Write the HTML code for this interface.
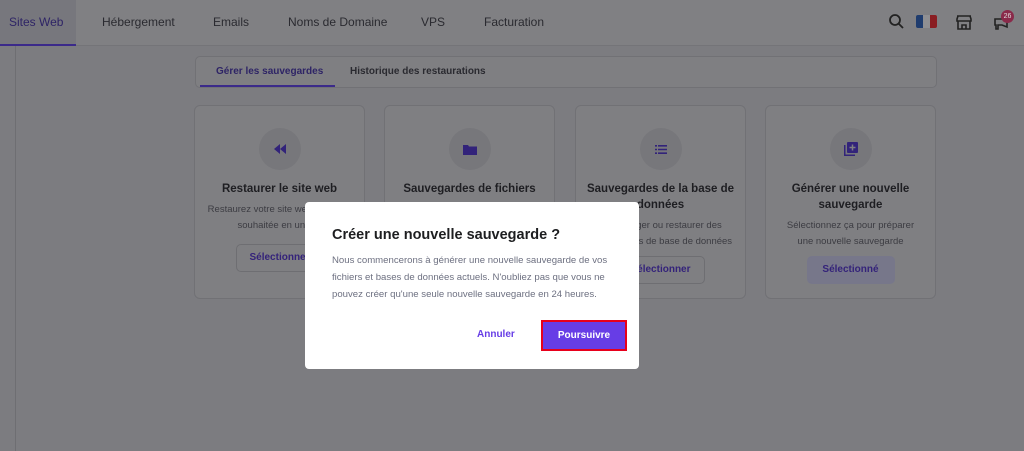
<!DOCTYPE html>
<html><head><meta charset="utf-8"><style>
*{box-sizing:border-box;margin:0;padding:0}
body{width:1024px;height:451px;overflow:hidden;background:#7c7c80;font-family:"Liberation Sans",sans-serif;position:relative}
.hdr{position:absolute;left:0;top:0;width:1024px;height:46px;background:#808083;border-bottom:1px solid #747478}
.nav{position:absolute;top:15px;font-size:12px;color:#2a2a30}
.side{position:absolute;left:15px;top:46px;width:1px;height:405px;background:#6e6e72}
.tabs{position:absolute;left:195px;top:56px;width:742px;height:32px;border:1px solid #717175;border-radius:5px;background:#7f7f82}
.card{position:absolute;top:105px;width:171px;height:194px;border:1px solid #717175;border-radius:6px;background:#7f7f82;text-align:center}
.circ{width:42px;height:42px;border-radius:50%;background:#77777b;margin:22px auto 0;display:flex;align-items:center;justify-content:center}
.ct{font-size:11.5px;font-weight:bold;color:#1e1e22;margin-top:11px;line-height:16px}
.cd{font-size:9.5px;color:#3c3c42;margin-top:5px;line-height:16px}
.btn{margin:10px auto 0;width:88px;height:28px;border:1px solid #6e6e72;border-radius:5px;font-size:10px;font-weight:bold;color:#34237a;line-height:26px}
.modal{position:absolute;left:305px;top:202px;width:334px;height:167px;background:#fff;border-radius:4px}
</style></head><body>
<div class="hdr">
<div style="position:absolute;left:0;top:0;width:76px;height:46px;background:#77777d;border-bottom:2px solid #3b2a8a"></div>
<div class="nav" style="left:9px;color:#2e2466">Sites Web</div>
<div class="nav" style="left:102px">Hébergement</div>
<div class="nav" style="left:213px">Emails</div>
<div class="nav" style="left:288px">Noms de Domaine</div>
<div class="nav" style="left:421px">VPS</div>
<div class="nav" style="left:484px">Facturation</div>
<svg style="position:absolute;left:888px;top:13px" width="16" height="16" viewBox="0 0 16 16"><circle cx="7" cy="7" r="5" fill="none" stroke="#222" stroke-width="1.8"/><path d="M11 11l4 4" stroke="#222" stroke-width="1.8"/></svg>
<div style="position:absolute;left:916px;top:15px;width:21px;height:13px;border-radius:2px;background:linear-gradient(90deg,#1f3c6e 33%,#8f8f92 33%,#8f8f92 66%,#8a1d22 66%)"></div>
<svg style="position:absolute;left:955px;top:13px" width="18" height="18" viewBox="0 0 18 18"><path d="M2 3h14M2 6l1-3h12l1 3v2H2zM3 8v8h12V8M7 16v-4h4v4" fill="none" stroke="#222" stroke-width="1.6"/></svg>
<svg style="position:absolute;left:993px;top:15px" width="16" height="16" viewBox="0 0 16 16"><path d="M2 4h7l5-2v10l-5-2H5v4H3V10H2z" fill="none" stroke="#222" stroke-width="1.6"/></svg>
<div style="position:absolute;left:1001px;top:10px;width:13px;height:13px;border-radius:50%;background:#8a2a4a;color:#ddd;font-size:7px;text-align:center;line-height:13px">26</div>
</div>
<div class="side"></div>
<div class="tabs">
<div style="position:absolute;left:20px;top:9px;font-size:10px;font-weight:bold;color:#2e2466">Gérer les sauvegardes</div>
<div style="position:absolute;left:4px;top:28px;width:135px;height:2px;background:#3b2a8a"></div>
<div style="position:absolute;left:154px;top:9px;font-size:10px;font-weight:bold;color:#2a2a30">Historique des restaurations</div>
</div>
<div class="card" style="left:194px"><div class="circ"><svg width="12" height="10" viewBox="0 0 12 10"><path d="M6 0v10L0 5zM12 0v10L6 5z" fill="#32237a"/></svg></div><div class="ct">Restaurer le site web</div><div class="cd">Restaurez votre site web à la date<br>souhaitée en un clic</div><div class="btn">Sélectionner</div></div>
<div class="card" style="left:384px"><div class="circ"><svg width="14" height="11" viewBox="0 0 14 11"><path d="M0 1h5l1 1.5h8V11H0z" fill="#32237a"/></svg></div><div class="ct">Sauvegardes de fichiers</div><div class="cd">Télécharger ou restaurer des<br>fichiers</div><div class="btn">Sélectionner</div></div>
<div class="card" style="left:575px"><div class="circ"><svg width="12" height="9" viewBox="0 0 12 9"><path d="M0 0h2v1.6H0zM3 0h9v1.6H3zM0 3.7h2v1.6H0zM3 3.7h9v1.6H3zM0 7.4h2V9H0zM3 7.4h9V9H3z" fill="#32237a"/></svg></div><div class="ct">Sauvegardes de la base de<br>données</div><div class="cd">Télécharger ou restaurer des<br>sauvegardes de base de données</div><div class="btn" style="margin-top:6px">Sélectionner</div></div>
<div class="card" style="left:765px"><div class="circ"><svg width="14" height="14" viewBox="0 0 14 14"><path d="M0 3h1.5v9.5H11V14H0z" fill="#32237a"/><rect x="3" y="0" width="11" height="11" rx="1" fill="#32237a"/><path d="M8.5 2.5v6M5.5 5.5h6" stroke="#7f7f82" stroke-width="1.5"/></svg></div><div class="ct">Générer une nouvelle<br>sauvegarde</div><div class="cd">Sélectionnez ça pour préparer<br>une nouvelle sauvegarde</div><div class="btn" style="margin-top:6px;background:#77778a;border-color:#77778a">Sélectionné</div></div>
<div class="modal">
<div style="position:absolute;left:27px;top:25px;font-size:14.5px;font-weight:bold;color:#1d1e20">Créer une nouvelle sauvegarde ?</div>
<div style="position:absolute;left:27px;top:50px;width:282px;font-size:9.6px;line-height:17px;color:#6d7081">Nous commencerons à générer une nouvelle sauvegarde de vos fichiers et bases de données actuels. N'oubliez pas que vous ne pouvez créer qu'une seule nouvelle sauvegarde en 24 heures.</div>
<div style="position:absolute;left:172px;top:127px;font-size:10px;font-weight:bold;color:#673de6">Annuler</div>
<div style="position:absolute;left:236px;top:118px;width:86px;height:31px;border:2px solid #e8001c;background:#673de6;color:#fff;font-size:10px;font-weight:bold;text-align:center;line-height:27px">Poursuivre</div>
</div>
</body></html>
